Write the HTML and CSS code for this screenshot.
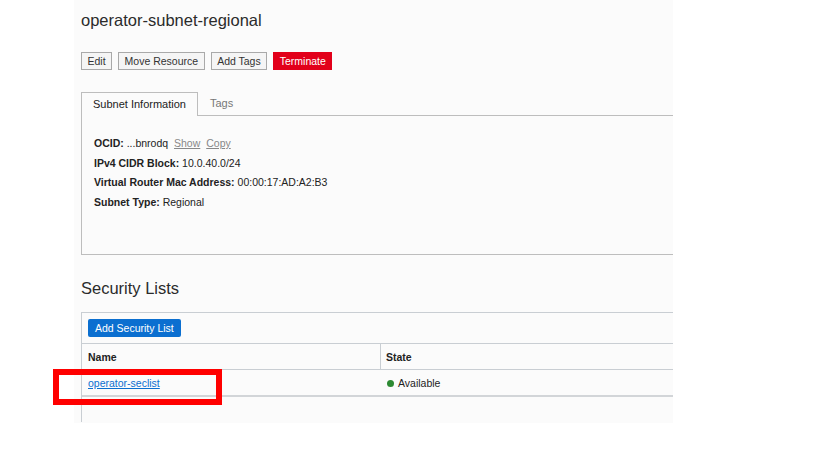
FILE: index.html
```html
<!DOCTYPE html>
<html>
<head>
<meta charset="utf-8">
<link rel="stylesheet" href="styles.css">
</head>
<body>
<div class="page">
  <h1 class="title">operator-subnet-regional</h1>
  <div class="actions">
    <button class="btn">Edit</button>
    <button class="btn">Move Resource</button>
    <button class="btn">Add Tags</button>
    <button class="btn btn-danger">Terminate</button>
  </div>
  <div class="tabs">
    <div class="tab active">Subnet Information</div>
    <div class="tab">Tags</div>
    <div class="tab-fill"></div>
  </div>
  <div class="info">
    <div class="row"><b>OCID:</b> ...bnrodq <a class="muted">Show</a> <a class="muted">Copy</a></div>
    <div class="row"><b>IPv4 CIDR Block:</b> 10.0.40.0/24</div>
    <div class="row"><b>Virtual Router Mac Address:</b> 00:00:17:AD:A2:B3</div>
    <div class="row"><b>Subnet Type:</b> Regional</div>
  </div>
  <h2 class="section">Security Lists</h2>
  <div class="table-box">
    <div class="toolbar"><button class="btn-primary">Add Security List</button></div>
    <div class="thead">
      <div class="cell c1">Name</div>
      <div class="cell c2">State</div>
    </div>
    <div class="trow">
      <div class="cell c1"><a class="link">operator-seclist</a><span class="highlight"></span></div>
      <div class="cell c2"><span class="dot"></span>Available</div>
    </div>
  </div>
</div>
</body>
</html>
```

FILE: styles.css
```css
* { box-sizing: border-box; }
html, body { margin: 0; padding: 0; background: #ffffff; }
body { font-family: "Liberation Sans", Arial, sans-serif; color: #222; }

.page {
  margin-left: 74px;
  width: 599px;
  height: 423px;
  background: #fbfbfb;
  padding: 10px 0 0 7px;
}

.title {
  margin: 0;
  font-size: 16.5px;
  font-weight: normal;
  line-height: 20px;
  color: #2b2b2b;
}

.actions {
  display: flex;
  gap: 6px;
  margin-top: 22px;
}
.btn {
  font-family: inherit;
  font-size: 10.5px;
  height: 18px;
  padding: 0 5.5px;
  border: 1px solid #a9a9a9;
  background: #f5f5f5;
  color: #333;
  border-radius: 0;
  line-height: 16px;
}
.btn-danger {
  background: #e2001a;
  border-color: #e2001a;
  color: #fff;
}

.tabs {
  display: flex;
  margin-top: 22px;
  height: 24px;
  font-size: 11px;
}
.tab {
  padding: 0 12px;
  line-height: 23px;
  color: #777;
  border-bottom: 1px solid #bdbdbd;
}
.tab.active {
  color: #222;
  border: 1px solid #bdbdbd;
  border-bottom: none;
  width: 117px;
  padding: 0 11px;
}
.tab-fill { flex: 1; border-bottom: 1px solid #bdbdbd; }

.info {
  height: 139px;
  border-left: 1px solid #bdbdbd;
  border-bottom: 1px solid #bdbdbd;
  padding: 18px 0 0 12px;
  font-size: 10.5px;
}
.row { line-height: 19.6px; color: #222; }
.row b { font-weight: bold; }
.muted { color: #888; text-decoration: underline; margin-left: 3px; }

.section {
  margin: 23px 0 0 0;
  font-size: 16.5px;
  font-weight: normal;
  line-height: 20px;
  color: #2b2b2b;
}

.table-box {
  margin-top: 14px;
  height: 110px;
  border-top: 1px solid #c9ced3;
  border-left: 1px solid #c9ced3;
  font-size: 10.5px;
}
.toolbar {
  height: 31px;
  padding: 6px 0 0 6px;
  border-bottom: 1px solid #c9ced3;
}
.btn-primary {
  font-family: inherit;
  font-size: 10.5px;
  height: 18px;
  padding: 0 7px;
  background: #0b6fd0;
  color: #fff;
  border: none;
  border-radius: 2px;
  line-height: 18px;
}
.thead, .trow { display: flex; }
.thead { height: 26px; border-bottom: 1px solid #c9ced3; font-weight: bold; }
.trow { height: 27px; border-bottom: 2px solid #d2d5d8; }
.cell { line-height: 26px; padding-left: 6px; position: relative; }
.c1 { width: 299px; }
.thead .c1 { border-right: 1px solid #c9ced3; }
.c2 { flex: 1; padding-left: 5px; }
.trow .c2 { padding-left: 6px; }
.link { color: #0b6fd0; text-decoration: underline; }
.dot {
  display: inline-block;
  width: 7px; height: 7px;
  border-radius: 50%;
  background: #2d8a33;
  margin-right: 4px;
  vertical-align: 0;
}
.highlight {
  position: absolute;
  left: -29px;
  top: -1px;
  width: 169px;
  height: 36px;
  border: 6px solid #ff0000;
}
```
